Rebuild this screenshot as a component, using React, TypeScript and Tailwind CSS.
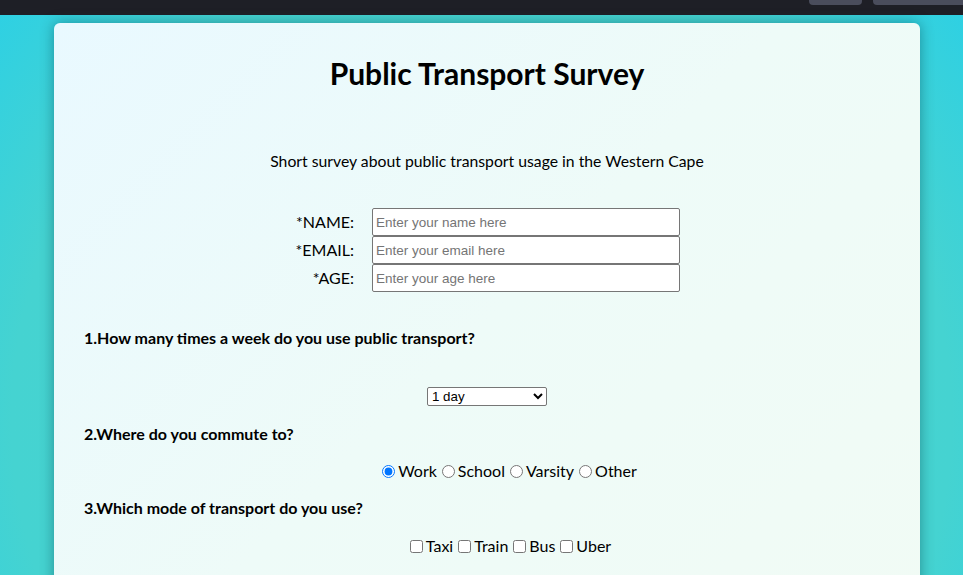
import { useState } from "react";

const bodyFont = { fontFamily: "Lato, 'Open Sans', sans-serif" };

function Field({ label, placeholder }: { label: string; placeholder: string }) {
  return (
    <div className="flex h-[28px] items-center">
      <label className="w-[78px] pr-[18px] text-right text-[16px] text-black">{label}</label>
      <input
        placeholder={placeholder}
        className="h-[28px] w-[308px] rounded-[2px] border border-[#767676] bg-white px-[3px] text-[13.5px] text-black outline-none placeholder:text-[#757575]"
        style={{ fontFamily: "Arial, 'Liberation Sans', sans-serif" }}
      />
    </div>
  );
}

export default function App() {
  const [place, setPlace] = useState("work");
  const [modes, setModes] = useState<string[]>([]);

  const toggle = (m: string) => setModes((prev) => (prev.includes(m) ? prev.filter((x) => x !== m) : [...prev, m]));

  return (
    <div
      className="h-[575px] w-full overflow-hidden bg-[radial-gradient(circle_at_50%_420px,#4bd4cc_0px,#45d3d1_470px,#2dd0e4_640px)]"
      style={bodyFont}
    >
      {/* browser chrome strip */}
      <div className="flex h-[15px] items-start justify-end gap-[11px] bg-[#1e1f26]">
        <div className="h-[5px] w-[53px] rounded-b-[4px] bg-[#4a4d5c]" />
        <div className="h-[5px] w-[90px] rounded-bl-[4px] bg-[#4a4d5c]" />
      </div>

      <div className="ml-[54px] mt-[8px] h-[600px] w-[866px] rounded-[6px] bg-[linear-gradient(135deg,#e9f9ff_0%,#eefbf8_50%,#f1fbf5_100%)] px-[30px] shadow-[0_0_14px_rgba(0,60,70,0.45)]">
        <h1 className="pt-[33px] text-center text-[30px] font-bold leading-[34px] text-black">Public Transport Survey</h1>
        <p className="mt-[61px] text-center text-[15.75px] leading-[20px] text-black">
          Short survey about public transport usage in the Western Cape
        </p>

        <div className="mt-[37px] flex justify-center">
          <div className="flex flex-col">
            <Field label="*NAME:" placeholder="Enter your name here" />
            <Field label="*EMAIL:" placeholder="Enter your email here" />
            <Field label="*AGE:" placeholder="Enter your age here" />
          </div>
        </div>

        <h3 className="mt-[36px] text-[16px] font-bold leading-[20px] text-black">1.How many times a week do you use public transport?</h3>
        <div className="mt-[39px] flex justify-center">
          <select
            className="h-[19px] w-[120px] rounded-[2px] border border-[#767676] bg-white text-[13.33px] text-black"
            style={{ fontFamily: "Arial, 'Liberation Sans', sans-serif" }}
            defaultValue="1"
          >
            <option value="1">1 day</option>
            <option value="2">2 days</option>
            <option value="3">3 days</option>
            <option value="4">4 days</option>
            <option value="5">5 days</option>
          </select>
        </div>

        <h3 className="mt-[18px] text-[16px] font-bold leading-[20px] text-black">2.Where do you commute to?</h3>
        <div className="mt-[17px] flex justify-center pl-[40px] text-[16px] leading-[20px] text-black">
          {[
            ["work", "Work"],
            ["school", "School"],
            ["varsity", "Varsity"],
            ["other", "Other"],
          ].map(([v, l]) => (
            <label key={v} className="flex items-center">
              <input
                type="radio"
                name="place"
                checked={place === v}
                onChange={() => setPlace(v)}
                className="ml-[5px] mr-[3px] h-[13px] w-[13px] accent-[#0075ff]"
              />
              <span>{l}</span>
            </label>
          ))}
        </div>

        <h3 className="mt-[17px] text-[16px] font-bold leading-[20px] text-black">3.Which mode of transport do you use?</h3>
        <div className="mt-[18px] flex justify-center pl-[42px] text-[16px] leading-[20px] text-black">
          {["Taxi", "Train", "Bus", "Uber"].map((m) => (
            <label key={m} className="flex items-center">
              <input
                type="checkbox"
                checked={modes.includes(m)}
                onChange={() => toggle(m)}
                className="ml-[5px] mr-[3px] h-[13px] w-[13px]"
              />
              <span>{m}</span>
            </label>
          ))}
        </div>
      </div>
    </div>
  );
}
